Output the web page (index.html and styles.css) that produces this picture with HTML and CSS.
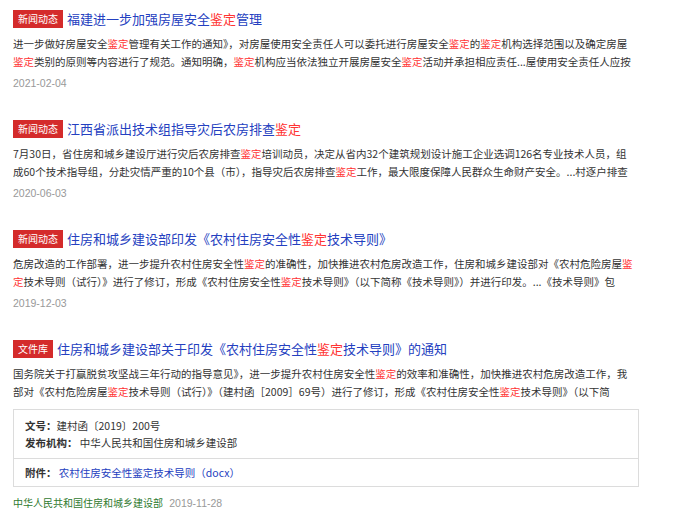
FILE: index.html
```html
<!DOCTYPE html>
<html lang="zh-CN">
<head>
    <meta charset="UTF-8">
    <meta name="viewport" content="width=device-width, initial-scale=1.0">
    <title>房屋安全鉴定 - 搜索结果</title>
    <link rel="stylesheet" href="styles.css">
</head>
<body>

<div class="results">

    <div class="result">
        <div class="title-row">
            <span class="tag">新闻动态</span>
            <a class="title" href="#">福建进一步加强房屋安全<em>鉴定</em>管理</a>
        </div>
        <p class="abstract">进一步做好房屋安全<em>鉴定</em>管理有关工作的通知》，对房屋使用安全责任人可以委托进行房屋安全<em>鉴定</em>的<em>鉴定</em>机构选择范围以及确定房屋<em>鉴定</em>类别的原则等内容进行了规范。通知明确，<em>鉴定</em>机构应当依法独立开展房屋安全<em>鉴定</em>活动并承担相应责任...屋使用安全责任人应按</p>
        <div class="date">2021-02-04</div>
    </div>

    <div class="result">
        <div class="title-row">
            <span class="tag">新闻动态</span>
            <a class="title" href="#">江西省派出技术组指导灾后农房排查<em>鉴定</em></a>
        </div>
        <p class="abstract">7月30日，省住房和城乡建设厅进行灾后农房排查<em>鉴定</em>培训动员，决定从省内32个建筑规划设计施工企业选调126名专业技术人员，组成60个技术指导组，分赴灾情严重的10个县（市），指导灾后农房排查<em>鉴定</em>工作，最大限度保障人民群众生命财产安全。...村逐户排查</p>
        <div class="date">2020-06-03</div>
    </div>

    <div class="result">
        <div class="title-row">
            <span class="tag">新闻动态</span>
            <a class="title" href="#">住房和城乡建设部印发《农村住房安全性<em>鉴定</em>技术导则》</a>
        </div>
        <p class="abstract">危房改造的工作部署，进一步提升农村住房安全性<em>鉴定</em>的准确性，加快推进农村危房改造工作，住房和城乡建设部对《农村危险房屋<em>鉴定</em>技术导则（试行）》进行了修订，形成《农村住房安全性<em>鉴定</em>技术导则》（以下简称《技术导则》）并进行印发。...《技术导则》包</p>
        <div class="date">2019-12-03</div>
    </div>

    <div class="result">
        <div class="title-row">
            <span class="tag">文件库</span>
            <a class="title" href="#">住房和城乡建设部关于印发《农村住房安全性<em>鉴定</em>技术导则》的通知</a>
        </div>
        <p class="abstract">国务院关于打赢脱贫攻坚战三年行动的指导意见》，进一步提升农村住房安全性<em>鉴定</em>的效率和准确性，加快推进农村危房改造工作，我部对《农村危险房屋<em>鉴定</em>技术导则（试行）》（建村函［2009］69号）进行了修订，形成《农村住房安全性<em>鉴定</em>技术导则》（以下简</p>
        <div class="doc-box">
            <div class="doc-info">
                <div class="doc-line"><b>文号：</b>建村函〔2019〕200号</div>
                <div class="doc-line"><b>发布机构：</b> 中华人民共和国住房和城乡建设部</div>
            </div>
            <div class="doc-files">
                <div class="doc-line"><b>附件：</b> <a href="#">农村住房安全性鉴定技术导则（docx）</a></div>
            </div>
        </div>
        <div class="source"><span class="site">中华人民共和国住房和城乡建设部</span> <span class="date-inline">2019-11-28</span></div>
    </div>

</div>

</body>
</html>
```

FILE: styles.css
```css
body {
    margin: 0;
    background: #fff;
    font-family: "Noto Sans CJK SC", "Liberation Sans", sans-serif;
    color: #333;
}
a {
    text-decoration: none;
}
em {
    font-style: normal;
    color: #f33;
}
.results {
    width: 626px;
    padding: 10px 0 0 13px;
}
.result {
    margin-bottom: 29px;
}
.title-row {
    display: flex;
    align-items: center;
    height: 18px;
}
.tag {
    height: 18px;
    line-height: 18px;
    padding: 0 5px;
    font-size: 10px;
    color: #fff;
    background-color: #d42b2b;
    white-space: nowrap;
}
.title {
    margin-left: 4px;
    font-size: 13px;
    line-height: 18px;
    color: #2440c0;
    white-space: nowrap;
}
.abstract {
    width: 621px;
    margin: 7px 0 0;
    font-size: 10.5px;
    line-height: 18px;
    height: 36px;
    overflow: hidden;
}
.date {
    margin-top: 4px;
    font-family: "Liberation Sans", sans-serif;
    font-size: 10.5px;
    line-height: 16px;
    color: #999;
}
.doc-box {
    margin-top: 8px;
    border: 1px solid #dcdcdc;
}
.doc-info {
    padding: 7px 11px;
    border-bottom: 1px solid #dcdcdc;
}
.doc-files {
    padding: 5px 11px;
}
.doc-line {
    font-size: 10.5px;
    line-height: 17px;
    white-space: nowrap;
}
.doc-line b {
    font-weight: bold;
}
.doc-line a {
    color: #2440c0;
}
.source {
    margin-top: 8px;
    font-size: 10px;
    line-height: 16px;
}
.site {
    color: #2f7a2f;
}
.date-inline {
    margin-left: 4px;
    font-family: "Liberation Sans", sans-serif;
    font-size: 10.5px;
    color: #999;
}
```
